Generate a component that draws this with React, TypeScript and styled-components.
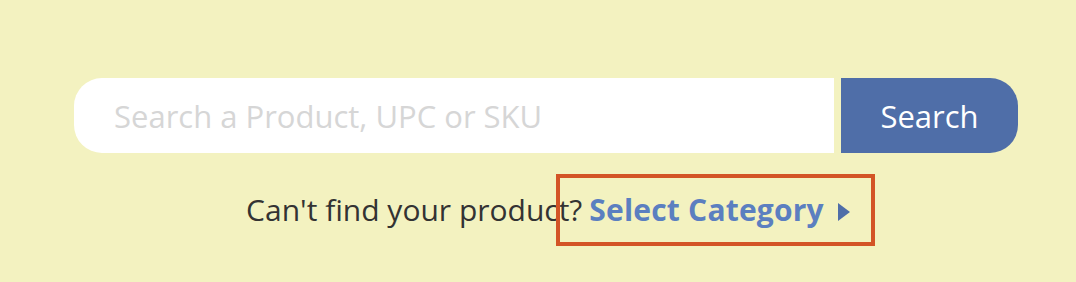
import React from "react";
import styled, { createGlobalStyle } from "styled-components";

const Global = createGlobalStyle`
  html, body { margin: 0; padding: 0; background: #f3f2c0; }
  body { font-family: "Open Sans", sans-serif; }
`;

const Page = styled.div`
  width: 1076px;
  height: 282px;
  background: #f3f2c0;
  box-sizing: border-box;
  padding: 78px 58px 0 74px;
`;

const SearchRow = styled.form`
  display: flex;
  gap: 7px;
  width: 944px;
  height: 75px;
  margin: 0;
`;

const Input = styled.input`
  flex: 1;
  min-width: 0;
  border: none;
  outline: none;
  background: #ffffff;
  border-radius: 28px 0 0 28px;
  padding: 0 0 0 40px;
  font-family: "Open Sans", sans-serif;
  font-size: 31px;
  color: #333;
  &::placeholder { color: #d6d6d6; }
`;

const Button = styled.button`
  width: 177px;
  border: none;
  background: #4f6ea8;
  color: #ffffff;
  border-radius: 0 28px 28px 0;
  font-family: "Open Sans", sans-serif;
  font-size: 31px;
  padding: 0;
`;

const HelpRow = styled.div`
  display: flex;
  justify-content: center;
  align-items: center;
  width: 944px;
  margin-top: 39px;
  padding-left: 4px;
  box-sizing: border-box;
  font-size: 30px;
  line-height: 36px;
  color: #333333;
  gap: 7px;
`;

const LinkWrap = styled.span`
  position: relative;
  display: inline-flex;
  align-items: center;
  gap: 14px;
  color: #5b7fc0;
  font-weight: 700;
  letter-spacing: 0.2px;
`;

const Arrow = styled.span`
  width: 0;
  height: 0;
  margin-top: 4px;
  border-top: 9.5px solid transparent;
  border-bottom: 9.5px solid transparent;
  border-left: 12px solid #4f6ea8;
`;

const Highlight = styled.span`
  position: absolute;
  left: -33px;
  right: -25px;
  top: -18px;
  bottom: -18px;
  border: 4px solid #d35426;
  pointer-events: none;
`;

export default function App() {
  return (
    <>
      <Global />
      <Page>
        <SearchRow onSubmit={(e) => e.preventDefault()}>
          <Input placeholder="Search a Product, UPC or SKU" />
          <Button type="submit">Search</Button>
        </SearchRow>
        <HelpRow>
          <span>Can't find your product?</span>
          <LinkWrap>
            Select Category
            <Arrow />
            <Highlight />
          </LinkWrap>
        </HelpRow>
      </Page>
    </>
  );
}
